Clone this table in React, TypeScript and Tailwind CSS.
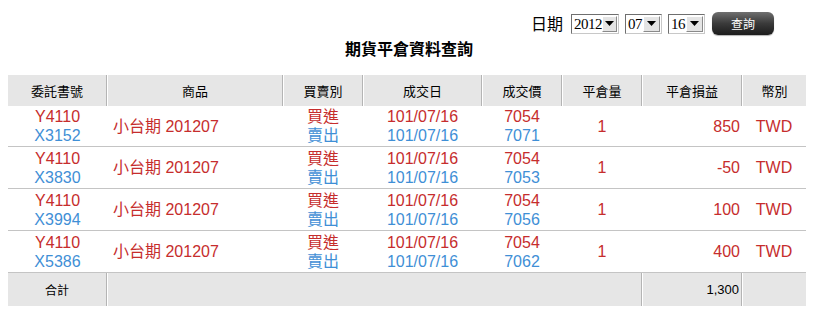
import React from 'react';

const RED = 'text-[#c62d2d]';
const BLUE = 'text-[#3f8fd6]';

type Row = { order: string[]; sell: string; pnl: string };

const rows: Row[] = [
    { order: ['Y4110', 'X3152'], sell: '7071', pnl: '850' },
    { order: ['Y4110', 'X3830'], sell: '7053', pnl: '-50' },
    { order: ['Y4110', 'X3994'], sell: '7056', pnl: '100' },
    { order: ['Y4110', 'X5386'], sell: '7062', pnl: '400' },
];

const headers = ['委託書號', '商品', '買賣別', '成交日', '成交價', '平倉量', '平倉損益', '幣別'];
const widths = ['w-[99px]', 'w-[176px]', 'w-[80px]', 'w-[119px]', 'w-[80px]', 'w-[80px]', 'w-[100px]', 'w-[64px]'];

function FakeSelect({ value, width }: { value: string; width: string }) {
    return (
        <div className={`flex h-[20px] ${width} items-stretch border border-t-[#6f6f6f] border-l-[#6f6f6f] border-r-[#c8c8c8] border-b-[#c8c8c8] bg-white`}>
            <span className="flex-1 pl-[2px] text-[15px] leading-[18px] tracking-[-0.5px] text-black font-['Liberation_Serif',serif]">{value}</span>
            <span className="my-[1px] mr-[1px] flex w-[17px] items-center justify-center border border-t-white border-l-white border-r-[#8a8a8a] border-b-[#8a8a8a] bg-[#e4e4e4]">
                <svg width="9" height="5" viewBox="0 0 9 5"><path d="M0 0h9L4.5 5z" fill="#000" /></svg>
            </span>
        </div>
    );
}

export default function App() {
    return (
        <div className="w-[818px] h-[316px] bg-white font-['Liberation_Sans','Noto_Sans_CJK_TC',sans-serif]">
            <div className="flex items-center justify-end gap-[6px] pr-[44px] pt-[12px]">
                <span className="mr-[2px] text-[16px] leading-[23px] text-black font-['Noto_Sans_CJK_TC',sans-serif]">日期</span>
                <FakeSelect value="2012" width="w-[48px]" />
                <FakeSelect value="07" width="w-[37px]" />
                <FakeSelect value="16" width="w-[37px]" />
                <button className="ml-[1px] h-[23px] w-[62px] rounded-[6px] bg-gradient-to-b from-[#707070] via-[#3a3a3a] to-[#1c1c1c] text-[12px] text-white shadow-[0_1px_1px_rgba(0,0,0,0.3)] font-['Noto_Sans_CJK_TC',sans-serif]">
                    查詢
                </button>
            </div>
            <h1 className="mt-[1px] text-center text-[16px] font-bold leading-[24px] text-black font-['Noto_Sans_CJK_TC',sans-serif]">
                期貨平倉資料查詢
            </h1>
            <table className="ml-[8px] mt-[15px] w-[798px] table-fixed border-separate border-spacing-0">
                <thead>
                    <tr>
                        {headers.map((h, i) => (
                            <th
                                key={h}
                                className={`${widths[i]} h-[31px] bg-[#e6e6e6] p-0 text-center text-[13px] font-normal text-black font-['Noto_Sans_CJK_TC',sans-serif] ${i > 0 ? 'border-l border-l-white' : ''} ${i < headers.length - 1 ? 'border-r border-r-[#b4b4b4]' : ''}`}
                            >
                                {h}
                            </th>
                        ))}
                    </tr>
                </thead>
                <tbody className="text-[16px] leading-[19px]">
                    {rows.map((r, idx) => (
                        <tr key={r.order[1]}>
                            <td className={`${idx === 0 ? 'h-[41px]' : 'h-[42px]'} border-b border-[#c4c4c4] p-0 text-center`}>
                                <div className={RED}>{r.order[0]}</div>
                                <div className={BLUE}>{r.order[1]}</div>
                            </td>
                            <td className={`border-b border-[#c4c4c4] py-0 pl-[6px] ${RED}`}>小台期 201207</td>
                            <td className="border-b border-[#c4c4c4] p-0 text-center">
                                <div className={RED}>買進</div>
                                <div className={BLUE}>賣出</div>
                            </td>
                            <td className="border-b border-[#c4c4c4] p-0 text-center">
                                <div className={RED}>101/07/16</div>
                                <div className={BLUE}>101/07/16</div>
                            </td>
                            <td className="border-b border-[#c4c4c4] p-0 text-center">
                                <div className={RED}>7054</div>
                                <div className={BLUE}>{r.sell}</div>
                            </td>
                            <td className={`border-b border-[#c4c4c4] p-0 text-center ${RED}`}>1</td>
                            <td className={`border-b border-[#c4c4c4] py-0 pr-[2px] text-right ${RED}`}>{r.pnl}</td>
                            <td className={`border-b border-[#c4c4c4] p-0 text-center ${RED}`}>TWD</td>
                        </tr>
                    ))}
                    <tr className="bg-[#e6e6e6] text-black">
                        <td className="h-[33px] border-r border-r-[#b4b4b4] p-0 text-center text-[12px] font-['Noto_Sans_CJK_TC',sans-serif]">合計</td>
                        <td colSpan={5} className="border-l border-r border-l-white border-r-[#b4b4b4] p-0"></td>
                        <td className="border-l border-r border-l-white border-r-[#b4b4b4] py-0 pr-[2px] text-right text-[13px]">1,300</td>
                        <td className="border-l border-l-white p-0"></td>
                    </tr>
                </tbody>
            </table>
        </div>
    );
}
